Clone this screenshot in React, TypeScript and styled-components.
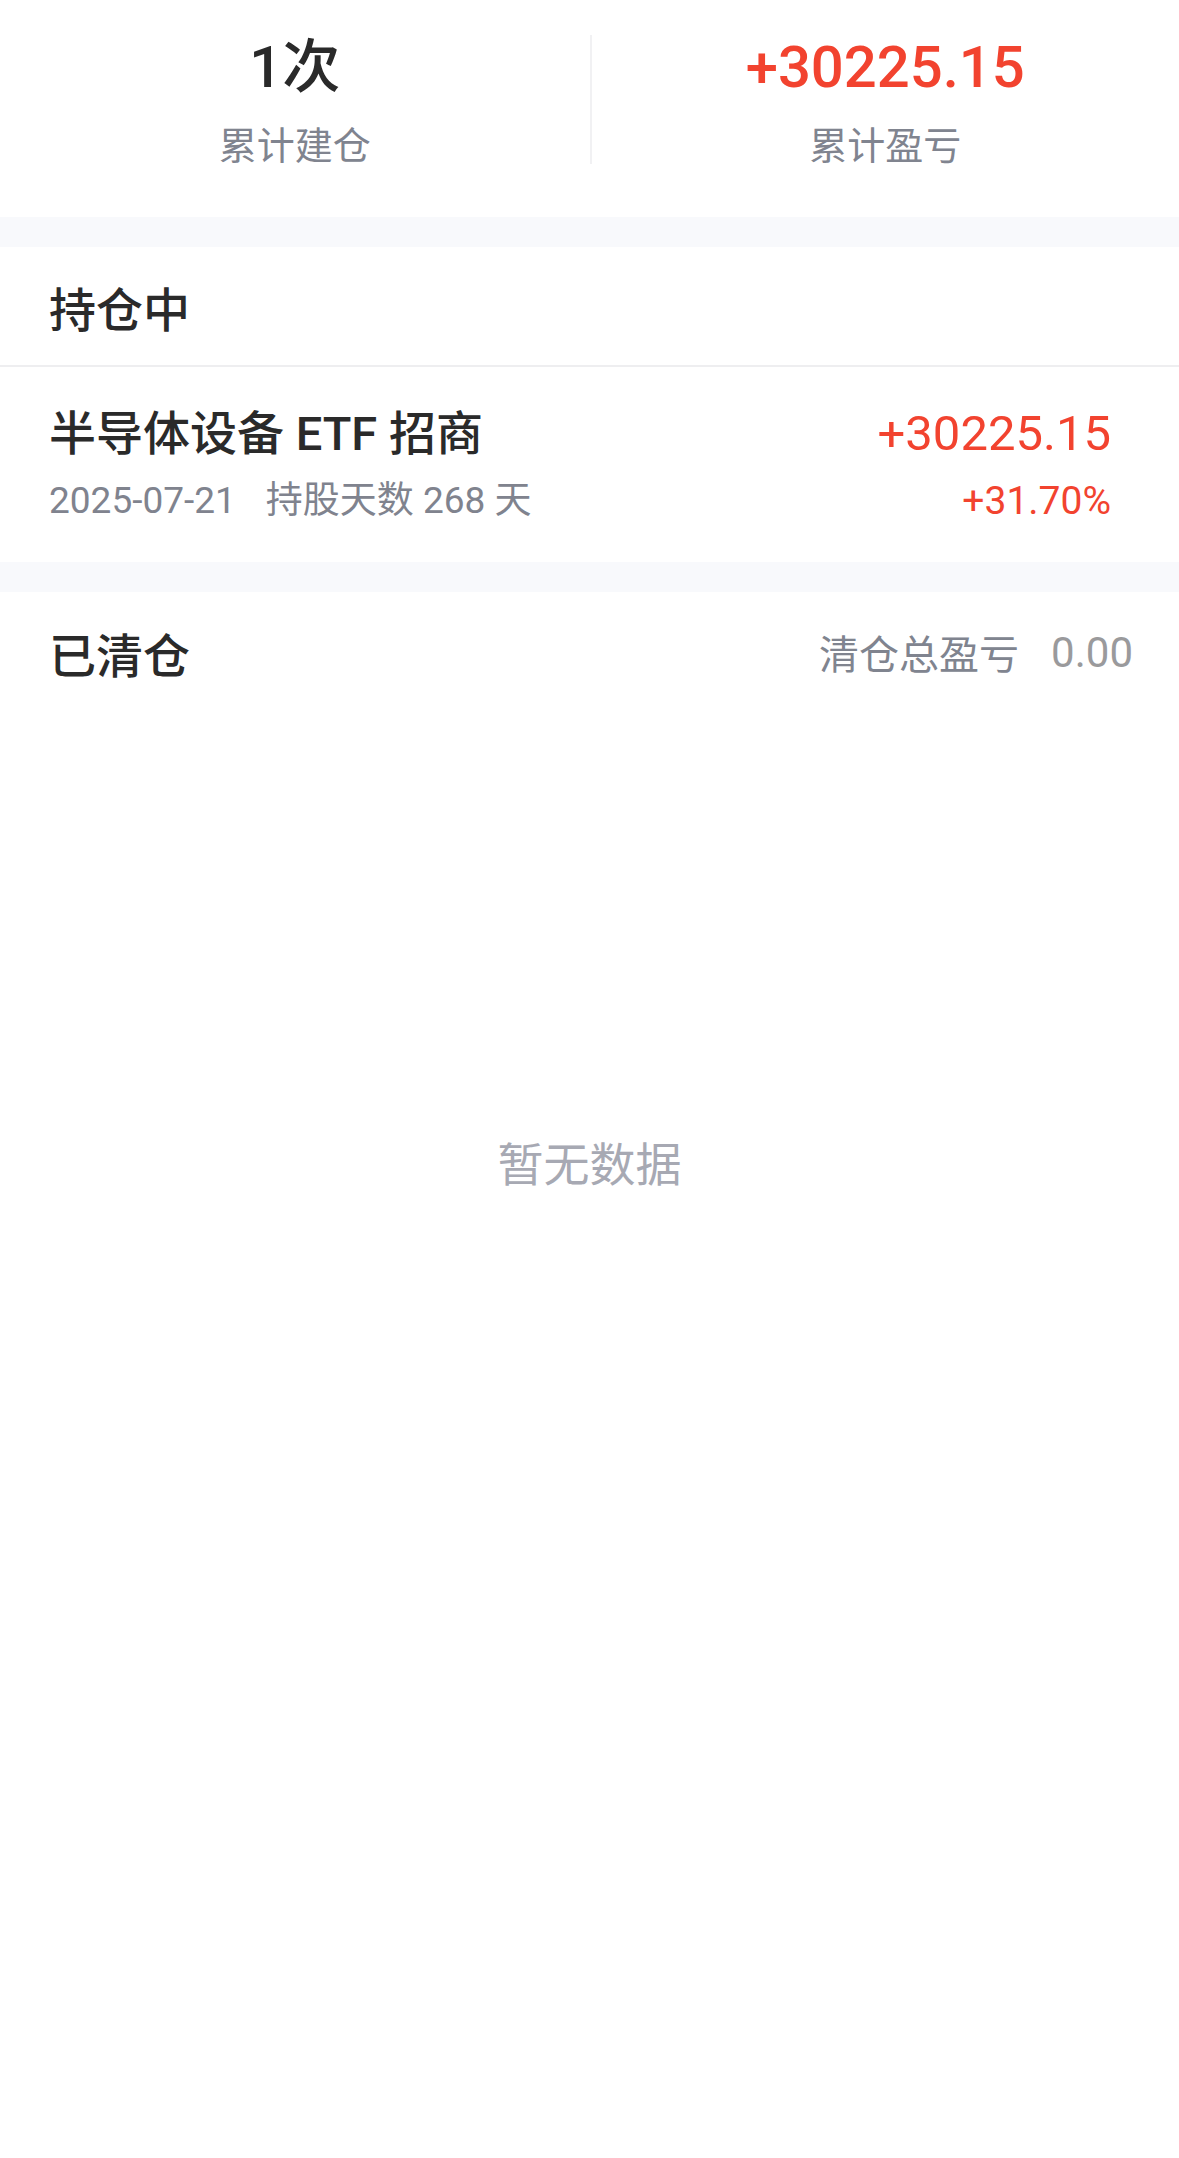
import React, { FC } from 'react';
import styled, { createGlobalStyle } from 'styled-components';

const GlobalStyle = createGlobalStyle`
  html, body {
    margin: 0;
    padding: 0;
    background: #ffffff;
  }
  body {
    font-family: Roboto, "Noto Sans CJK SC", sans-serif;
    color: #2a2a2a;
  }
`;

const Page = styled.div`
  width: 1179px;
  min-height: 2158px;
  background: #ffffff;
`;

const Stats = styled.div`
  display: grid;
  grid-template-columns: 1fr 1fr;
  padding: 35px 0 53px;
`;

const StatItem = styled.div<{ $divider?: boolean }>`
  display: flex;
  flex-direction: column;
  align-items: center;
  height: 129px;
  border-left: ${(p) => (p.$divider ? '2px solid #f1f1f3' : 'none')};
`;

const StatValue = styled.div<{ $red?: boolean }>`
  font-size: 58px;
  line-height: 64px;
  font-weight: 500;
  color: ${(p) => (p.$red ? '#f2432f' : '#2a2a2a')};
`;

const StatLabel = styled.div`
  margin-top: 25px;
  font-size: 38px;
  line-height: 44px;
  color: #80848f;
`;

const Band = styled.div`
  height: 30px;
  background: #f8f9fc;
`;

const SectionHead = styled.div<{ $line?: boolean }>`
  display: flex;
  align-items: center;
  justify-content: space-between;
  height: 120px;
  padding: 0 46px 0 49px;
  border-bottom: ${(p) => (p.$line ? '2px solid #eeeef0' : 'none')};
  box-sizing: border-box;
`;

const SectionTitle = styled.div`
  font-size: 47px;
  font-weight: 500;
  color: #2a2a2a;
`;

const Summary = styled.div`
  display: flex;
  align-items: center;
  gap: 32px;
`;

const SummaryLabel = styled.span`
  font-size: 40px;
  color: #80848f;
`;

const SummaryValue = styled.span`
  font-size: 42px;
  color: #9a9a9c;
`;

const HoldingRow = styled.div`
  display: flex;
  justify-content: space-between;
  padding: 37px 68px 38px 49px;
`;

const Column = styled.div<{ $right?: boolean }>`
  display: flex;
  flex-direction: column;
  gap: 14px;
  align-items: ${(p) => (p.$right ? 'flex-end' : 'flex-start')};
`;

const Name = styled.div`
  font-size: 47px;
  line-height: 60px;
  font-weight: 500;
  color: #2a2a2a;
  white-space: pre;
`;

const Meta = styled.div`
  font-size: 37px;
  line-height: 46px;
  color: #80838e;
  white-space: pre;
`;

const MetaDays = styled.span`
  margin-left: 30px;
`;

const Profit = styled.div<{ $small?: boolean }>`
  font-size: ${(p) => (p.$small ? '39px' : '49px')};
  line-height: ${(p) => (p.$small ? '46px' : '60px')};
  color: #f2432f;
`;

const Empty = styled.div`
  padding-top: 423px;
  text-align: center;
  font-size: 46px;
  line-height: 60px;
  color: #a7a9b3;
`;

const App: FC = () => {
  return (
    <Page>
      <GlobalStyle />
      <Stats>
        <StatItem>
          <StatValue>1次</StatValue>
          <StatLabel>累计建仓</StatLabel>
        </StatItem>
        <StatItem $divider>
          <StatValue $red>+30225.15</StatValue>
          <StatLabel>累计盈亏</StatLabel>
        </StatItem>
      </Stats>
      <Band />

      <SectionHead $line>
        <SectionTitle>持仓中</SectionTitle>
      </SectionHead>
      <HoldingRow>
        <Column>
          <Name>半导体设备 ETF 招商</Name>
          <Meta>
            2025-07-21<MetaDays>持股天数 268 天</MetaDays>
          </Meta>
        </Column>
        <Column $right>
          <Profit>+30225.15</Profit>
          <Profit $small>+31.70%</Profit>
        </Column>
      </HoldingRow>
      <Band />

      <SectionHead>
        <SectionTitle>已清仓</SectionTitle>
        <Summary>
          <SummaryLabel>清仓总盈亏</SummaryLabel>
          <SummaryValue>0.00</SummaryValue>
        </Summary>
      </SectionHead>
      <Empty>暂无数据</Empty>
    </Page>
  );
};

export default App;
